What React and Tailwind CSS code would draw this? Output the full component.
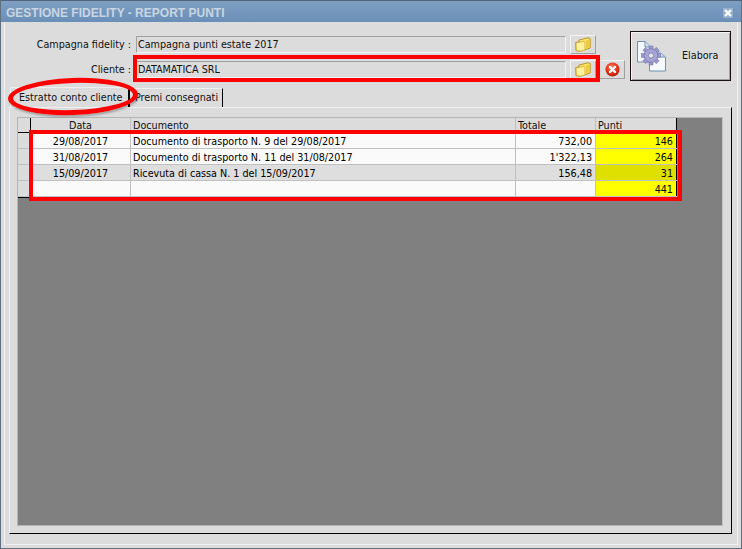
import React from "react";

const font = { fontFamily: '"DejaVu Sans Condensed", "Liberation Sans", Arial, sans-serif' };

function Folder() {
  return (
    <svg width="16" height="15" viewBox="0 0 16 15">
      <path d="M4 3 L13 0.8 L15.2 1.6 L15.2 11 L6 14 L1 13.8 L0.7 5.5 L4 5 Z" fill="#ffe566" stroke="#b8952b" strokeWidth="1" />
      <path d="M1 6 L9 4.4 L10 5 L10 13.2 L6 14 L1.5 13.6 Z" fill="#fff29a" stroke="#c9a63a" strokeWidth="0.7" />
      <path d="M11 3.4 L14.5 2.4 L14.5 10.6 L11 11.7 Z" fill="#f0cc40" />
    </svg>
  );
}

function FolderBtn() {
  return (
    <button className="w-[26px] h-[19px] flex items-center justify-center bg-[#dcdcdc] border border-t-[#f4f4f4] border-l-[#f4f4f4] border-r-[#a0a0a0] border-b-[#a0a0a0]">
      <Folder />
    </button>
  );
}

function CancelIcon() {
  return (
    <svg width="15" height="15" viewBox="0 0 15 15">
      <defs>
        <radialGradient id="rg" cx="45%" cy="35%" r="70%">
          <stop offset="0%" stopColor="#ff8a70" />
          <stop offset="55%" stopColor="#e8341c" />
          <stop offset="100%" stopColor="#b01808" />
        </radialGradient>
      </defs>
      <circle cx="7.5" cy="7.5" r="7" fill="url(#rg)" />
      <path d="M5 5 L10 10 M10 5 L5 10" stroke="#fff" strokeWidth="2.4" strokeLinecap="round" />
    </svg>
  );
}

function GearDocIcon() {
  const teeth = [0, 45, 90, 135, 180, 225, 270, 315];
  return (
    <svg width="32" height="32" viewBox="0 0 32 32">
      <path d="M1.5 1.5 H9 L15 7 V22 H1.5 Z" fill="#f4f8fd" stroke="#6f8fb5" />
      <path d="M9 1.5 V7 H15" fill="#cfe0f2" stroke="#6f8fb5" />
      <path d="M13.5 9.5 H20 L29.5 17 V31 H13.5 Z" fill="#f6f9fd" stroke="#6f8fb5" />
      <path d="M22 11.5 L22 17 H29" fill="#cfe0f2" stroke="#6f8fb5" />
      <g transform="translate(15 15.5)">
        {teeth.map((a) => (
          <rect key={a} x="-2" y="-9.5" width="4" height="5" fill="#9a9ad0" stroke="#6f6fa0" strokeWidth="0.5" transform={`rotate(${a})`} />
        ))}
        <circle r="6.8" fill="#a6a6d6" stroke="#7676a8" strokeWidth="0.7" />
        <circle r="2.6" fill="#e4e4f2" stroke="#6f6fa0" strokeWidth="0.7" />
      </g>
    </svg>
  );
}

const rows = [
  { d: "29/08/2017", t: "Documento di trasporto N. 9 del 29/08/2017", a: "732,00", p: "146", bg: "bg-[#fafafa]", y: "bg-[#ffff00]" },
  { d: "31/08/2017", t: "Documento di trasporto N. 11 del 31/08/2017", a: "1'322,13", p: "264", bg: "bg-[#fafafa]", y: "bg-[#ffff00]" },
  { d: "15/09/2017", t: "Ricevuta di cassa N. 1 del 15/09/2017", a: "156,48", p: "31", bg: "bg-[#dedede]", y: "bg-[#e0e000]" },
  { d: "", t: "", a: "", p: "441", bg: "bg-[#fafafa]", y: "bg-[#ffff00]" },
];

function Row({ r }) {
  return (
    <div className="flex h-4 border-b border-[#c0c0c0] text-black leading-[17px]">
      <div className="w-[13px] bg-[#dcdcdc] border-r border-black" />
      <div className={`w-[100px] text-center border-r border-[#c0c0c0] ${r.bg}`}>{r.d}</div>
      <div className={`w-[385px] pl-[2px] border-r border-[#c0c0c0] ${r.bg}`}>{r.t}</div>
      <div className={`w-[80px] text-right pr-[3px] border-r border-[#c0c0c0] ${r.bg}`}>{r.a}</div>
      <div className={`w-[81px] text-right pr-[3px] border-r border-black ${r.y}`}>{r.p}</div>
    </div>
  );
}

export default function App() {
  return (
    <div style={font} className="relative w-[742px] h-[549px] overflow-hidden flex flex-col bg-[#dcdcdc] border-x border-b border-[#5f7080] text-[10.7px] leading-[14px] text-[#111] whitespace-nowrap">
      <div className="h-[22px] shrink-0 flex items-center justify-between pt-[3px] pl-[5px] pr-[8px] bg-gradient-to-b from-[#7f9fc2] to-[#6a8fb8] border-t border-[#50657d]">
        <span className="text-[12px] font-bold text-[#c9d5e2]" style={{ fontFamily: '"Liberation Sans", Arial, sans-serif' }}>GESTIONE FIDELITY - REPORT PUNTI</span>
        <span className="w-[10px] h-[10px] flex items-center justify-center bg-white/25">
          <svg width="10" height="10" viewBox="0 0 10 10"><path d="M2 2 L8 8 M8 2 L2 8" stroke="#fff" strokeWidth="2.2" /></svg>
        </span>
      </div>

      <div className="flex-1 flex flex-col mx-[3px] mb-[3px] border-x border-b border-[#f0f0f0] pl-[4px] pr-[5px]">
        <div className="flex h-[54px] pt-[9px] shrink-0">
          <div className="flex flex-col gap-[6px] pt-[4px]">
            <div className="flex items-center h-[19px]">
              <span className="w-[122px] text-right mr-[5px]">Campagna fidelity :</span>
              <div className="w-[430px] h-[17px] pl-px border border-t-[#a0a0a0] border-l-[#a0a0a0] border-r-[#f4f4f4] border-b-[#f4f4f4] flex items-center">Campagna punti estate 2017</div>
              <div className="ml-[4px]"><FolderBtn /></div>
            </div>
            <div className="flex items-center h-[19px]">
              <span className="w-[122px] text-right mr-[5px]">Cliente :</span>
              <div className="w-[430px] h-[17px] pl-px border border-t-[#a0a0a0] border-l-[#a0a0a0] border-r-[#f4f4f4] border-b-[#f4f4f4] flex items-center">DATAMATICA SRL</div>
              <div className="ml-[4px]"><FolderBtn /></div>
              <button className="ml-[3px] w-[26px] h-[19px] flex items-center justify-center border border-t-[#f4f4f4] border-l-[#f4f4f4] border-r-[#a0a0a0] border-b-[#a0a0a0]"><CancelIcon /></button>
            </div>
          </div>
          <button className="ml-[5px] w-[101px] h-[50px] shrink-0 flex items-center border border-[#1a1010] shadow-[inset_1px_1px_0_#f4f4f4,inset_-1px_-1px_0_#a0a0a0] pl-[5px]">
            <GearDocIcon />
            <span className="ml-[14px]">Elabora</span>
          </button>
        </div>

        <div className="flex h-[21px] mt-[10px] shrink-0 items-end">
          <div className="ml-[1px] w-[120px] h-[20px] pl-[8px] flex items-center border-t border-l border-[#f0f0f0] border-r-2 border-r-black">Estratto conto cliente</div>
          <div className="w-[93px] h-[19px] pl-[5px] flex items-center border-t border-[#f0f0f0] border-r border-r-black">Premi consegnati</div>
        </div>

        <div className="flex-1 flex flex-col border-t border-l border-[#f0f0f0] border-r border-r-black border-b border-b-black pl-[7px] pr-[8px] pt-[9px] pb-[7px] mb-[10px]">
          <div className="flex-1 bg-[#808080] border border-[#b4b4b4] border-r-[#c4c4c4]">
            <div className="w-[659px]">
              <div className="flex h-[15px] border-b border-[#c0c0c0] bg-[#dcdcdc] leading-[16px]">
                <div className="w-[13px] border-r border-black border-b border-b-black h-[15px]" />
                <div className="w-[100px] text-center border-r border-[#c0c0c0]">Data</div>
                <div className="w-[385px] pl-[2px] border-r border-[#c0c0c0]">Documento</div>
                <div className="w-[80px] pl-[2px] border-r border-[#c0c0c0]">Totale</div>
                <div className="w-[81px] pl-[2px] border-r border-black">Punti</div>
              </div>
              {rows.map((r, i) => <Row key={i} r={r} />)}
              <div className="w-[13px] h-px bg-black" />
            </div>
          </div>
        </div>
      </div>

      <div className="absolute left-[132px] top-[55px] w-[467px] h-[27px] border-4 border-[#ff0000]" />
      <div className="absolute left-[28px] top-[130px] w-[653px] h-[71px] border-4 border-[#ff0000]" />
      <div className="absolute left-[7px] top-[78px] w-[130px] h-[37px] rounded-[50%] border-[5px] border-[#ff0000] -rotate-[2deg] shadow-[1px_2px_2px_rgba(0,0,0,0.25)]" />
    </div>
  );
}
